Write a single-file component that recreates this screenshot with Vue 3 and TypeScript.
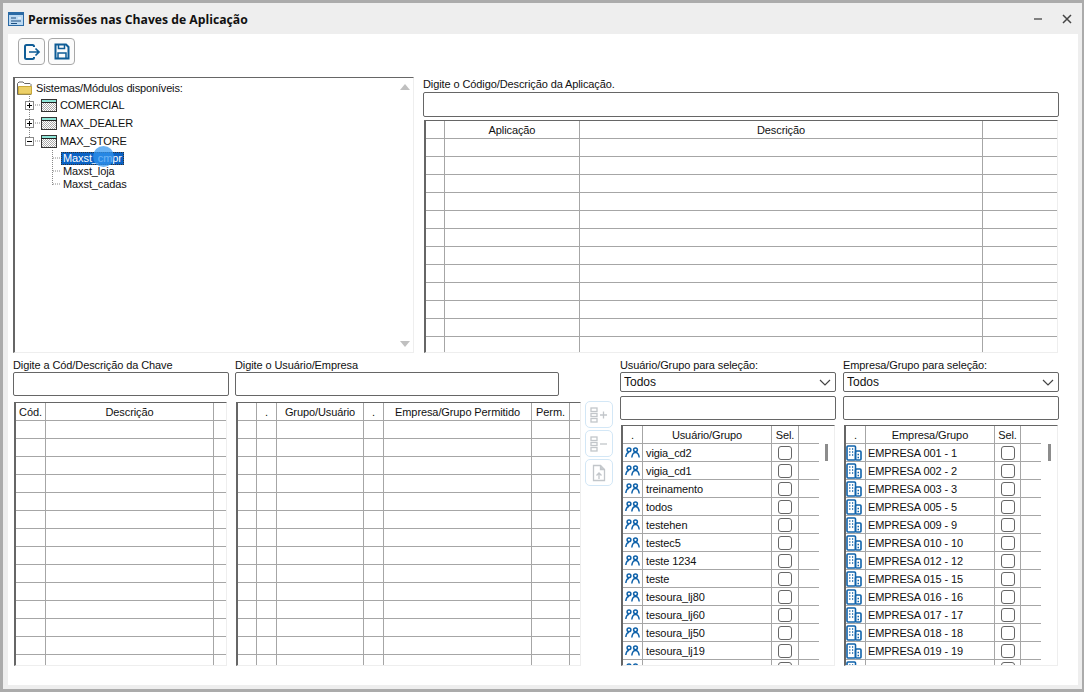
<script setup lang="ts">
const blank = (n: number) => Array.from({ length: n }, (_, i) => i)
const mainCols = '19px 135px 403px 75px'
const keyCols = '30px 168px 14px'
const permCols = '19px 20px 87px 20px 148px 38px 12px'
const userCols = '20px 129px 27px 20px'
const compCols = '20px 129px 26px 20px'
const users = ['vigia_cd2','vigia_cd1','treinamento','todos','testehen','testec5','teste 1234','teste','tesoura_lj80','tesoura_lj60','tesoura_lj50','tesoura_lj19','tesoura_lj18']
const companies = ['EMPRESA 001 - 1','EMPRESA 002 - 2','EMPRESA 003 - 3','EMPRESA 005 - 5','EMPRESA 009 - 9','EMPRESA 010 - 10','EMPRESA 012 - 12','EMPRESA 015 - 15','EMPRESA 016 - 16','EMPRESA 017 - 17','EMPRESA 018 - 18','EMPRESA 019 - 19','EMPRESA 050 - 50']
const modules = ['COMERCIAL','MAX_DEALER','MAX_STORE']
</script>

<template>
  <div class="window">
    <div class="inner">
      <header class="titlebar">
        <svg class="title-icon" width="16" height="14" viewBox="0 0 16 14">
          <rect x="0.5" y="0.5" width="15" height="13" fill="#bcd9f2" stroke="#2a6aa5"/>
          <rect x="1" y="1" width="14" height="2" fill="#2a6aa5"/>
          <path d="M3 6h5M3 9h10M3 11.5h6" stroke="#1d4f80" fill="none"/>
          <path d="M10 6h3" stroke="#fff" fill="none"/>
        </svg>
        <span class="title">Permissões nas Chaves de Aplicação</span>
        <span class="spacer"></span>
        <svg width="10" height="10" viewBox="0 0 10 10" class="win-min"><path d="M1 5h8" stroke="#808080" stroke-width="2"/></svg>
        <svg width="10" height="10" viewBox="0 0 10 10" class="win-close"><path d="M1 1l8 8M9 1l-8 8" stroke="#444" stroke-width="1.5"/></svg>
      </header>

      <main class="content">
        <div class="toolbar">
          <button class="tool">
            <svg width="18" height="18" viewBox="0 0 18 18" fill="none" stroke="#0e5c96" stroke-width="2">
              <path d="M11 4V3.500A1.500 1.500 0 0 0 9.500 2H3.500A1.500 1.500 0 0 0 2 3.500v11A1.500 1.500 0 0 0 3.500 16h6a1.500 1.500 0 0 0 1.500-1.500V14"/>
              <path d="M6 9h10M12.500 5.500L16 9l-3.500 3.500" stroke-width="1.700"/>
            </svg>
          </button>
          <button class="tool">
            <svg width="16" height="17" viewBox="0 0 16 17" fill="none" stroke="#0e5c96" stroke-width="2">
              <path d="M1.500 1.500h10.500l2.500 2.500v11.500h-13z"/>
              <path d="M4.500 2v3.500h6V2M4 15v-5h8v5" stroke-width="1.500"/>
            </svg>
          </button>
        </div>

        <section class="top-row">
          <div class="tree">
            <svg class="tree-lines" width="60" height="120" viewBox="0 0 60 120" fill="none" stroke="#888" stroke-dasharray="1 1">
              <path d="M14.500 18V62M18 27h7M18 45h7M18 63h7"/>
              <path d="M37.500 72v35M38 80h8M38 93h8M38 106h8"/>
            </svg>
            <div class="tree-root">
              <svg width="16" height="14" viewBox="0 0 16 14">
                <path d="M0.500 13.500V2.500L2 1h4l1.500 1.500H13l1 1V13.500z" fill="#fff" stroke="#666"/>
                <path d="M1.500 13V5.500h13V13z" fill="#ecd068" stroke="#c9a93a"/>
              </svg>
              <span>Sistemas/Módulos disponíveis:</span>
            </div>
            <div v-for="(m, i) in modules" :key="m" class="tree-node">
              <span class="expander"><i class="h"></i><i v-if="i < 2" class="v"></i></span>
              <svg class="win-icon" width="16" height="13" viewBox="0 0 16 13">
                <defs>
                  <pattern :id="'dither' + i" width="2" height="2" patternUnits="userSpaceOnUse">
                    <rect width="2" height="2" fill="#fff"/><rect width="1" height="1" fill="#aaa"/><rect x="1" y="1" width="1" height="1" fill="#aaa"/>
                  </pattern>
                </defs>
                <rect x="0.500" y="0.500" width="15" height="12" :fill="'url(#dither' + i + ')'" stroke="#333"/>
                <rect x="1" y="1" width="14" height="2" fill="#8fe6d8"/>
                <path d="M0 3.500h16" stroke="#222"/>
              </svg>
              <span>{{ m }}</span>
            </div>
            <div class="leaf selected">Maxst_cmpr</div>
            <div class="leaf">Maxst_loja</div>
            <div class="leaf">Maxst_cadas</div>
            <span class="pointer"></span>
            <svg class="arrow arrow-up" width="10" height="6" viewBox="0 0 10 6"><path d="M5 0l5 6H0z" fill="#c0c0c0"/></svg>
            <svg class="arrow arrow-down" width="10" height="6" viewBox="0 0 10 6"><path d="M5 6L0 0h10z" fill="#c0c0c0"/></svg>
          </div>

          <div class="app-panel">
            <label class="lbl">Digite o Código/Descrição da Aplicação.</label>
            <input class="field app-field" />
            <div class="grid app-grid">
              <div class="row head" :style="{ gridTemplateColumns: mainCols }">
                <span></span><span>Aplicação</span><span>Descrição</span><span></span>
              </div>
              <div v-for="i in blank(12)" :key="i" class="row" :style="{ gridTemplateColumns: mainCols }">
                <span></span><span></span><span></span><span></span>
              </div>
            </div>
          </div>
        </section>

        <section class="bottom-row">
          <div class="key-panel">
            <label class="lbl low">Digite a Cód/Descrição da Chave</label>
            <input class="field tall" />
            <div class="grid key-grid">
              <div class="row head" :style="{ gridTemplateColumns: keyCols }">
                <span>Cód.</span><span>Descrição</span><span></span>
              </div>
              <div v-for="i in blank(14)" :key="i" class="row" :style="{ gridTemplateColumns: keyCols }">
                <span></span><span></span><span></span>
              </div>
            </div>
          </div>

          <div class="perm-panel">
            <label class="lbl low">Digite o Usuário/Empresa</label>
            <input class="field tall perm-field" />
            <div class="grid perm-grid">
              <div class="row head" :style="{ gridTemplateColumns: permCols }">
                <span></span><span>.</span><span>Grupo/Usuário</span><span>.</span><span>Empresa/Grupo Permitido</span><span>Perm.</span><span></span>
              </div>
              <div v-for="i in blank(14)" :key="i" class="row" :style="{ gridTemplateColumns: permCols }">
                <span></span><span></span><span></span><span></span><span></span><span></span><span></span>
              </div>
            </div>
          </div>

          <div class="side-btns">
            <button class="side-btn">
              <svg width="18" height="16" viewBox="0 0 18 16" fill="none" stroke="#c2c6ca" stroke-width="1.300">
                <rect x="1" y="1" width="6" height="3.500"/><rect x="1" y="6.500" width="6" height="3"/><rect x="1" y="11.500" width="6" height="3.500"/>
                <path d="M10 8h7M13.500 4.500v7"/>
              </svg>
            </button>
            <button class="side-btn">
              <svg width="18" height="16" viewBox="0 0 18 16" fill="none" stroke="#c2c6ca" stroke-width="1.300">
                <rect x="1" y="1" width="6" height="3.500"/><rect x="1" y="6.500" width="6" height="3"/><rect x="1" y="11.500" width="6" height="3.500"/>
                <path d="M10 8h7"/>
              </svg>
            </button>
            <button class="side-btn">
              <svg width="14" height="18" viewBox="0 0 14 18" fill="none" stroke="#c2c6ca" stroke-width="1.300">
                <path d="M1.500 1.500h7l4 4v11h-11z"/><path d="M8.500 1.500v4h4" fill="#c8ccd0"/><path d="M7 15V9M4.500 11.500L7 9l2.500 2.500"/>
              </svg>
            </button>
          </div>

          <div class="pick-panel">
            <label class="lbl low">Usuário/Grupo para seleção:</label>
            <div class="select-wrap">
              <select class="field select"><option>Todos</option></select>
              <svg class="chev" width="12" height="7" viewBox="0 0 12 7"><path d="M1 1l5 5 5-5" fill="none" stroke="#444" stroke-width="1.200"/></svg>
            </div>
            <input class="field tall pick-field" />
            <div class="grid pick-grid">
              <div class="row head" :style="{ gridTemplateColumns: userCols }">
                <span>.</span><span>Usuário/Grupo</span><span>Sel.</span><span></span>
              </div>
              <div v-for="u in users" :key="u" class="row" :style="{ gridTemplateColumns: userCols }">
                <span class="ico">
                  <svg width="15" height="11" viewBox="0 0 15 11" fill="none" stroke="#0f62aa" stroke-width="1.500">
                    <circle cx="4" cy="2.800" r="1.900"/><path d="M0.800 10C1.200 7 2.500 5.500 4 5.500"/>
                    <circle cx="10.500" cy="2.800" r="1.900"/><path d="M6.800 10.500C7.200 7 8.500 5.500 10.500 5.500S13.800 7 14.200 10.500"/>
                  </svg>
                </span>
                <span class="txt">{{ u }}</span>
                <span class="chk"><input type="checkbox" /></span>
                <span></span>
              </div>
              <i class="thumb"></i>
            </div>
          </div>

          <div class="pick-panel">
            <label class="lbl low">Empresa/Grupo para seleção:</label>
            <div class="select-wrap">
              <select class="field select"><option>Todos</option></select>
              <svg class="chev" width="12" height="7" viewBox="0 0 12 7"><path d="M1 1l5 5 5-5" fill="none" stroke="#444" stroke-width="1.200"/></svg>
            </div>
            <input class="field tall pick-field" />
            <div class="grid pick-grid comp-grid">
              <div class="row head" :style="{ gridTemplateColumns: compCols }">
                <span>.</span><span>Empresa/Grupo</span><span>Sel.</span><span></span>
              </div>
              <div v-for="c in companies" :key="c" class="row" :style="{ gridTemplateColumns: compCols }">
                <span class="ico co">
                  <svg width="16" height="16" viewBox="0 0 16 16" fill="none" stroke="#0f62aa" stroke-width="1.600">
                    <rect x="1" y="1" width="8.500" height="14" rx="1"/>
                    <rect x="9.500" y="6" width="5.500" height="9" rx="1"/>
                    <path d="M3.200 4h1.200M6 4h1.200M3.200 7h1.200M6 7h1.200M3.200 10h1.200M6 10h1.200M11.500 9.500h1.500M11.500 12.500h1.500" stroke-width="1.300"/>
                  </svg>
                </span>
                <span class="txt">{{ c }}</span>
                <span class="chk"><input type="checkbox" /></span>
                <span></span>
              </div>
              <i class="thumb"></i>
            </div>
          </div>
        </section>
      </main>
    </div>
  </div>
</template>

<style>
html, body { margin: 0; padding: 0; background: #aaa; }
</style>

<style scoped>
.window {
  width: 1084px; height: 692px; box-sizing: border-box; overflow: hidden;
  padding: 3px 2px 3px 3px; background: #ababab;
  font: 11px "Liberation Sans", sans-serif; letter-spacing: -0.1px; color: #111;
}
.inner {
  height: 100%; box-sizing: border-box; background: #eeeeee;
  padding: 0 4px 4px 5px; display: flex; flex-direction: column;
}
.titlebar { height: 31px; flex: none; display: flex; align-items: center; }
.title-icon { flex: none; margin-top: 1px; }
.title { margin: 1px 0 0 4px; font: bold 12.2px "Open Sans", sans-serif; letter-spacing: 0; color: #111; }
.spacer { flex: 1; }
.win-min { margin-right: 19px; margin-top: 1px; }
.win-close { margin-right: 6px; margin-top: 1px; }

.content { flex: 1; min-height: 0; background: #fff; padding: 4px 0 0 5px; overflow: hidden; }
.toolbar { display: flex; gap: 3px; margin-left: 5px; height: 27px; }
.tool {
  width: 27px; height: 27px; padding: 0; background: #fbfbfb;
  border: 1px solid #a8a8a8; border-radius: 4px;
  display: flex; align-items: center; justify-content: center;
}

.top-row { display: flex; gap: 9px; margin-top: 12px; height: 276px; }
.tree {
  position: relative; width: 401px; height: 276px; box-sizing: border-box;
  border-style: solid; border-color: #666 #eeeeee #eeeeee #666;
  border-width: 1px 1px 1px 2px;
  padding: 3px 0 0 2px;
}
.tree-lines { position: absolute; left: 0; top: 0; }
.tree-root { display: flex; align-items: center; gap: 3px; height: 14px; letter-spacing: -0.15px; }
.tree-node { display: flex; align-items: center; height: 18px; padding-left: 9px; position: relative; left: -1px; }
.tree-root + .tree-node { margin-top: 1px; }
.expander {
  width: 7px; height: 7px; border: 1px solid #888; background: #fff; position: relative; flex: none; margin-right: 7px;
}
.expander .h { position: absolute; left: 1px; top: 3px; width: 5px; height: 1px; background: #000; }
.expander .v { position: absolute; left: 3px; top: 1px; width: 1px; height: 5px; background: #000; }
.win-icon { flex: none; margin-right: 3px; }
.leaf { height: 13px; line-height: 13px; margin-left: 44px; padding: 0 2px; width: fit-content; position: relative; }
.tree-node + .leaf { margin-top: 2px; }
.leaf.selected { background: #0a62c4; color: #fff; outline: 1px dotted #333; outline-offset: -1px; }
.pointer {
  position: absolute; left: 78px; top: 68px; width: 21px; height: 21px; border-radius: 50%;
  background: rgba(50, 150, 240, 0.72);
}
.arrow { position: absolute; left: 385px; }
.arrow-up { top: 6px; }
.arrow-down { top: 263px; }

.app-panel { width: 636px; display: flex; flex-direction: column; }
.lbl { display: block; height: 15px; line-height: 15px; white-space: nowrap; }
.lbl.low { height: 14px; line-height: 14px; }
.field {
  box-sizing: border-box; display: block; margin: 0; padding: 0 3px; width: 100%;
  background: #fff; border: 1px solid #666; border-radius: 2px; outline: none;
  font: inherit; color: inherit;
}
.app-field { height: 25px; margin-bottom: 3px; }
.tall { height: 24px; }

.grid {
  position: relative; overflow: hidden; box-sizing: border-box;
  border-style: solid; border-color: #666 #eeeeee #eeeeee #666;
  border-width: 1px 1px 1px 2px;
}
.app-grid { margin-left: 1px; width: 634px; height: 233px; }
.row { display: grid; height: 18px; box-sizing: border-box; border-bottom: 1px solid #a6a6a6; }
.row > span { border-right: 1px solid #a6a6a6; display: flex; align-items: center; justify-content: center; white-space: nowrap; min-width: 0; }
.row > span:last-child { border-right: none; }
.head { height: 18px; }

.bottom-row { display: flex; margin-top: 5px; height: 308px; }
.key-panel { width: 216px; margin-right: 6px; display: flex; flex-direction: column; }
.key-grid { margin: 6px 2px 0 1px; flex: 1; }
.perm-panel { width: 346px; display: flex; flex-direction: column; }
.perm-field { width: 324px; }
.perm-grid { margin: 6px 0 0 1px; flex: 1; width: 345px; }

.side-btns { width: 28px; margin: 43px 7px 0 4px; display: flex; flex-direction: column; gap: 2px; }
.side-btn {
  width: 28px; height: 27px; padding: 0; background: #fff;
  border: 1.500px solid #d3e7f6; border-radius: 5px;
  display: flex; align-items: center; justify-content: center;
}

.pick-panel { width: 216px; display: flex; flex-direction: column; margin-right: 7px; }
.pick-panel:last-child { margin-right: 0; }
.select-wrap { position: relative; height: 20px; margin-bottom: 4px; }
.select { height: 20px; appearance: none; padding-left: 3px; font-size: 12px; }
.chev { position: absolute; right: 5px; top: 7px; }
.pick-field { flex: none; }
.pick-grid { margin: 5px 1px 0 1px; flex: 1; }
.pick-grid .row { width: 196px; }
.comp-grid .row { width: 195px; }
.ico { justify-content: flex-start !important; padding-left: 2px; }
.ico.co { padding-left: 0; }
.txt { justify-content: flex-start !important; padding-left: 3px; }
.comp-grid .txt { padding-left: 2px; }
.chk input {
  appearance: none; width: 14px; height: 14px; margin: 0; background: #fff;
  border: 1px solid #666; border-radius: 3px;
}
.thumb { position: absolute; left: 202px; top: 18px; width: 3px; height: 17px; background: #8c8c8c; }
</style>
